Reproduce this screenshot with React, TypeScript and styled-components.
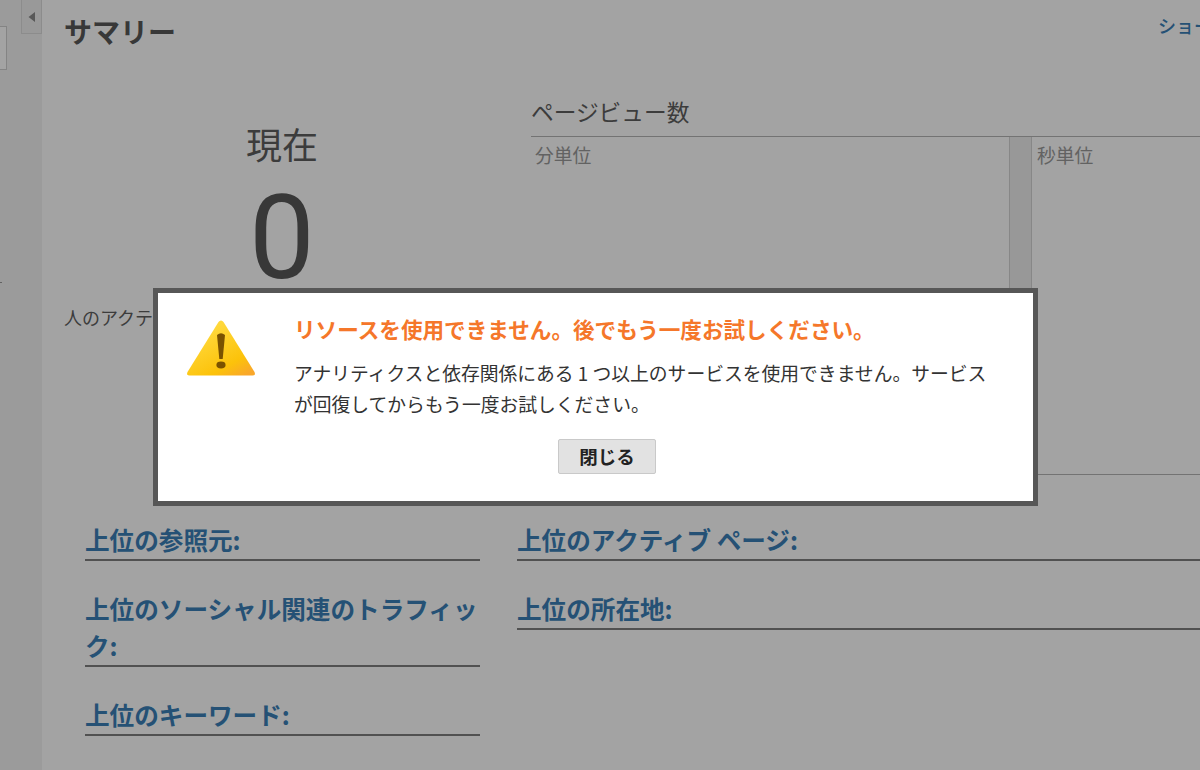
import styled, { createGlobalStyle } from 'styled-components';

const GlobalStyle = createGlobalStyle`
  html, body {
    margin: 0;
    padding: 0;
    width: 1200px;
    height: 770px;
    overflow: hidden;
    background: #fff;
    font-family: "Noto Sans CJK JP", "Noto Sans", sans-serif;
  }
`;

const Page = styled.div`
  position: relative;
  display: flex;
  width: 1200px;
  height: 770px;
  overflow: hidden;
`;

const Sidebar = styled.aside`
  position: relative;
  flex: 0 0 42px;
  display: flex;
  align-items: flex-start;
  justify-content: space-between;
  background: #f3f3f3;
`;

const SearchStub = styled.div`
  width: 7px;
  height: 44px;
  margin-top: 26px;
  box-sizing: border-box;
  background: #fff;
  border: 1px solid #cfcfcf;
  border-left: 0;
`;

const CollapseButton = styled.div`
  width: 21px;
  height: 34px;
  display: flex;
  align-items: center;
  justify-content: center;
  box-sizing: border-box;
  background: #f0f0f0;
  border: 1px solid #dcdcdc;
  border-top: 0;
`;

const SidebarTick = styled.span`
  position: absolute;
  left: 0;
  top: 282px;
  width: 2px;
  height: 1px;
  background: #9a9a9a;
`;

const Main = styled.main`
  flex: 0 0 1240px;
  box-sizing: border-box;
  padding: 11px 0 0 22px;
`;

const Header = styled.header`
  display: grid;
  grid-template-columns: 1094px auto;
  align-items: start;
`;

const Title = styled.h1`
  margin: 0;
  font-size: 28px;
  line-height: 40px;
  font-weight: 700;
  color: #585858;
`;

const Shortcut = styled.a`
  font-size: 18px;
  line-height: 28px;
  font-weight: 500;
  white-space: nowrap;
  color: #3a7fb8;
`;

const Summary = styled.section`
  display: grid;
  grid-template-columns: 467px 1fr;
  height: 424px;
  margin-top: 8px;
`;

const NowPanel = styled.div`
  display: flex;
  flex-direction: column;
`;

const NowLabel = styled.div`
  width: 436px;
  margin-top: 58px;
  text-align: center;
  font-size: 36px;
  line-height: 52px;
  color: #5f5f5f;
`;

const NowCount = styled.div`
  width: 436px;
  text-align: center;
  font-family: Roboto, "Liberation Sans", sans-serif;
  font-size: 117px;
  line-height: 120px;
  margin-top: 9px;
  color: #585858;
`;

const NowCaption = styled.div`
  margin-top: 6px;
  font-size: 18px;
  line-height: 26px;
  white-space: nowrap;
  color: #5f5f5f;
`;

const ViewsPanel = styled.div`
  display: flex;
  flex-direction: column;
`;

const ViewsTitle = styled.h2`
  margin: 26px 0 0;
  height: 52px;
  padding-top: 9px;
  box-sizing: border-box;
  border-bottom: 1px solid #b4b4b4;
  font-size: 22.7px;
  line-height: 36px;
  font-weight: 400;
  color: #5f5f5f;
`;

const Charts = styled.div`
  display: grid;
  grid-template-columns: 478px 23px 1fr;
  height: 337px;
  border-bottom: 1px solid #b4b4b4;
`;

const Chart = styled.div<{ $inset: number }>`
  padding: 5px ${({ $inset }) => $inset}px;
  font-size: 18.8px;
  line-height: 26px;
  color: #9a9a9a;
`;

const Splitter = styled.div`
  background: #eeeeee;
  border-left: 1px solid #d4d4d4;
  border-right: 1px solid #d4d4d4;
`;

const Lists = styled.section`
  display: grid;
  grid-template-columns: 395px 1fr;
  column-gap: 37px;
  align-items: start;
  padding-left: 21px;
  margin-top: 38px;
`;

const ListColumn = styled.div`
  display: flex;
  flex-direction: column;
  gap: 29px;
`;

const ListHeading = styled.h3`
  margin: 0;
  padding-bottom: 1px;
  border-bottom: 2px solid #7f7f7f;
  font-size: 24.6px;
  line-height: 37px;
  font-weight: 700;
  color: #3a7fb8;
`;

const Backdrop = styled.div`
  position: absolute;
  inset: 0;
  background: rgba(0, 0, 0, 0.36);
`;

const Dialog = styled.div`
  position: absolute;
  left: 153px;
  top: 288px;
  width: 885px;
  height: 218px;
  box-sizing: border-box;
  border: 5px solid #575757;
  background: #fff;
  display: grid;
  grid-template-columns: 136px 1fr;
`;

const IconCell = styled.div`
  padding: 26px 0 0 28px;
`;

const Body = styled.div`
  padding: 20px 43px 0 0;
`;

const DialogTitle = styled.h2`
  margin: 0;
  font-size: 21.6px;
  line-height: 32px;
  font-weight: 700;
  color: #f5772a;
  white-space: nowrap;
`;

const Message = styled.p`
  margin: 12px 0 0;
  font-size: 18.8px;
  line-height: 31px;
  color: #333;
`;

const Actions = styled.div`
  display: flex;
  padding-left: 264px;
  margin-top: 20px;
`;

const CloseButton = styled.button`
  width: 98px;
  height: 35px;
  padding: 0 0 1px;
  box-sizing: border-box;
  background: #e2e2e2;
  border: 1px solid #c9c9c9;
  border-radius: 2px;
  font-family: inherit;
  font-size: 18.5px;
  font-weight: 700;
  color: #222;
`;

const WarningIcon = () => (
  <svg width="70" height="58" viewBox="0 0 70 58">
    <defs>
      <linearGradient id="warnFill" x1="0.3" y1="0.2" x2="0.85" y2="1">
        <stop offset="0" stopColor="#ffd83a" />
        <stop offset="0.7" stopColor="#fcc20a" />
        <stop offset="1" stopColor="#f9a72a" />
      </linearGradient>
    </defs>
    <path
      d="M35 1.5 Q36.5 1.5 37.5 3 L68.5 53 Q70 56.5 66.5 56.5 L3.5 56.5 Q0 56.5 1.5 53 L32.5 3 Q33.5 1.5 35 1.5 Z"
      fill="url(#warnFill)"
    />
    <path d="M31 16 Q35 12.5 39 16 L36.7 40 L33.3 40 Z" fill="#7a5200" />
    <ellipse cx="35" cy="46" rx="4.6" ry="3.4" fill="#7a5200" />
  </svg>
);

const CollapseArrow = () => (
  <svg width="8" height="10" viewBox="0 0 8 10">
    <path d="M7 0 L0.5 5 L7 10 Z" fill="#8a8a8a" />
  </svg>
);

export default function App() {
  return (
    <Page>
      <GlobalStyle />
      <Sidebar>
        <SearchStub />
        <CollapseButton>
          <CollapseArrow />
        </CollapseButton>
        <SidebarTick />
      </Sidebar>
      <Main>
        <Header>
          <Title>サマリー</Title>
          <Shortcut>ショートカット</Shortcut>
        </Header>
        <Summary>
          <NowPanel>
            <NowLabel>現在</NowLabel>
            <NowCount>0</NowCount>
            <NowCaption>人のアクティブ ユーザー</NowCaption>
          </NowPanel>
          <ViewsPanel>
            <ViewsTitle>ページビュー数</ViewsTitle>
            <Charts>
              <Chart $inset={4}>分単位</Chart>
              <Splitter />
              <Chart $inset={5}>秒単位</Chart>
            </Charts>
          </ViewsPanel>
        </Summary>
        <Lists>
          <ListColumn>
            <ListHeading>上位の参照元:</ListHeading>
            <ListHeading>上位のソーシャル関連のトラフィック:</ListHeading>
            <ListHeading>上位のキーワード:</ListHeading>
          </ListColumn>
          <ListColumn>
            <ListHeading>上位のアクティブ ページ:</ListHeading>
            <ListHeading>上位の所在地:</ListHeading>
          </ListColumn>
        </Lists>
      </Main>
      <Backdrop />
      <Dialog>
        <IconCell>
          <WarningIcon />
        </IconCell>
        <Body>
          <DialogTitle>リソースを使用できません。後でもう一度お試しください。</DialogTitle>
          <Message>
            アナリティクスと依存関係にある 1 つ以上のサービスを使用できません。サービスが回復してからもう一度お試しください。
          </Message>
          <Actions>
            <CloseButton>閉じる</CloseButton>
          </Actions>
        </Body>
      </Dialog>
    </Page>
  );
}
